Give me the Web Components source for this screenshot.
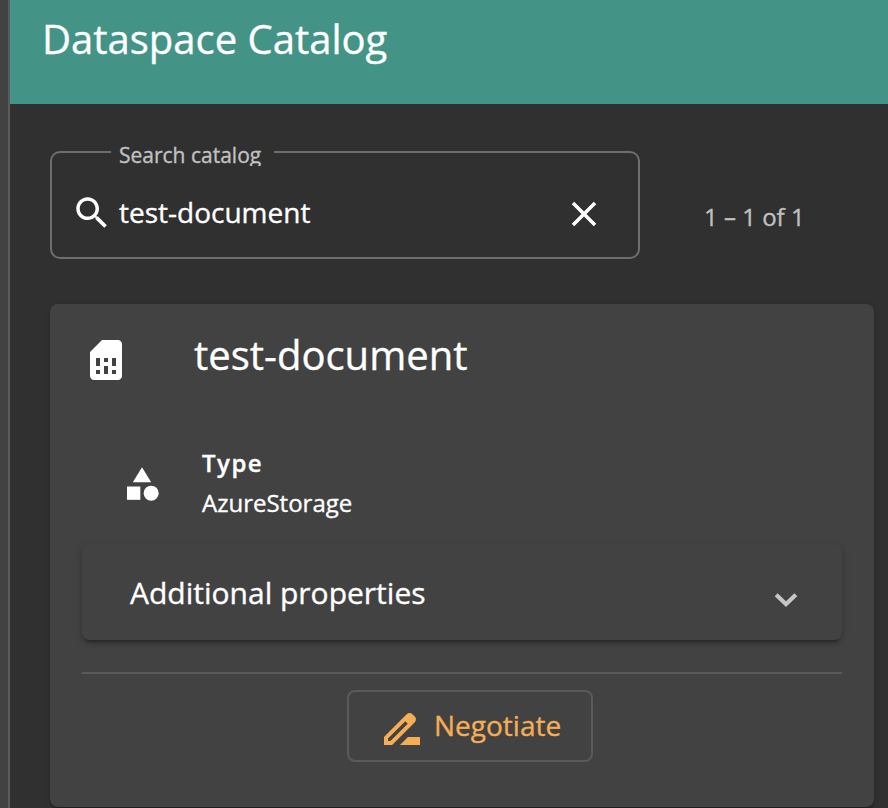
<!DOCTYPE html>
<html lang="en"><head><meta charset="utf-8"><title>Dataspace Catalog</title>
<style>
html,body{margin:0;height:808px;overflow:hidden;background:#303030}
body{font-family:"Open Sans","Noto Sans",sans-serif;color:#fff;-webkit-text-stroke:.35px currentColor}
</style></head><body>
<catalog-shell>
  <catalog-header slot="header">Dataspace Catalog</catalog-header>
  <search-field slot="search" label="Search catalog">test-document</search-field>
  <page-range slot="range">1 – 1 of 1</page-range>
  <asset-card>
    <span slot="title">test-document</span>
    <property-item label="Type">AzureStorage</property-item>
    <expansion-panel>Additional properties</expansion-panel>
    <outline-button slot="action">Negotiate</outline-button>
  </asset-card>
</catalog-shell>
<script>
const icons = {
  search:'<path d="M15.5 14h-.79l-.28-.27C15.41 12.59 16 11.11 16 9.5 16 5.91 13.09 3 9.5 3S3 5.91 3 9.5 5.91 16 9.5 16c1.61 0 3.09-.59 4.23-1.57l.27.28v.79l5 4.99L20.49 19l-4.99-5zm-6 0C7.01 14 5 11.99 5 9.5S7.01 5 9.5 5 14 7.01 14 9.5 11.99 14 9.5 14z"/>',
  close:'<path d="M19 6.41L17.59 5 12 10.59 6.41 5 5 6.41 10.59 12 5 17.59 6.41 19 12 13.41 17.59 19 19 17.59 13.41 12z"/>',
  sim:'<path d="M19.99 4c0-1.1-.89-2-1.99-2h-8L4 8v12c0 1.1.9 2 2 2h12.01c1.1 0 1.99-.9 1.99-2l-.01-16zM9 19H7v-2h2v2zm8 0h-2v-2h2v2zm-8-4H7v-4h2v4zm4 4h-2v-4h2v4zm0-6h-2v-2h2v2zm4 2h-2v-4h2v4z"/>',
  category:'<path d="M12 2l-5.5 9h11z"/><circle cx="17.5" cy="17.5" r="4.5"/><path d="M3 13.5h8v8H3z"/>',
  rename:'<path d="M18.41 5.8L17.2 4.59c-.78-.78-2.05-.78-2.83 0l-2.68 2.68L3 15.96V20h4.04l8.74-8.74 2.63-2.63c.79-.78.79-2.05 0-2.83zM6.21 18H5v-1.21l8.66-8.66 1.21 1.21L6.21 18zM11 20l4-4h6v4H11z"/>',
  chevron:'<path d="M7.1 9.35L12 14.1l4.9-4.75" fill="none" stroke="currentColor" stroke-width="2.1"/>'
};
function define(name, html){
  customElements.define(name, class extends HTMLElement{
    constructor(){
      super();
      const t=document.createElement('template');
      t.innerHTML=html;
      this.attachShadow({mode:'open'}).append(t.content.cloneNode(true));
      this.shadowRoot.querySelectorAll('[data-label]').forEach(e=>e.textContent=this.getAttribute('label'));
    }
  });
}
customElements.define('ui-icon', class extends HTMLElement{
  connectedCallback(){
    if(this.shadowRoot) return;
    this.attachShadow({mode:'open'}).innerHTML=`<style>:host{display:block;flex:none;width:48px;height:48px}svg{display:block;width:100%;height:100%;fill:currentColor}</style><svg viewBox="0 0 24 24">${icons[this.getAttribute('name')]}</svg>`;
  }
});
define('catalog-shell',`<style>
:host{display:flex;height:808px;overflow:hidden}
.rail{width:8px;flex:none;background:#424242;border-right:2px solid #5a5a5a}
main{flex:1;display:flex;flex-direction:column}
.content{padding:40px 14px 0 40px}
.tools{display:flex;align-items:flex-start;height:160px}
</style><div class="rail"></div><main><slot name="header"></slot><div class="content"><div class="tools"><slot name="search"></slot><slot name="range"></slot></div><slot></slot></div></main>`);
define('catalog-header',`<style>
:host{display:block;box-sizing:border-box;height:104px;flex:none;background:#439487;padding:7px 32px;font-size:40px;line-height:64px;white-space:nowrap}
</style><slot></slot>`);
define('search-field',`<style>
:host{display:grid;width:590px;height:115px;flex:none}
.outline,.row{grid-area:1/1}
.outline{display:flex;margin-top:7px;height:108px}
.outline>div{box-sizing:border-box;border:2px solid #6e6e6e}
.start{width:61px;border-right:0!important;border-radius:10px 0 0 10px}
.gap{width:163px;border-width:0 0 2px!important}
.end{flex:1;border-left:0!important;border-radius:0 10px 10px 0}
.label{display:block;margin:-14px 0 0 8px;height:29px;width:155px;overflow:hidden;font-size:21px;line-height:36px;color:#c1c1c1;white-space:nowrap}
.row{display:flex;align-items:center;height:42px;margin-top:48px;padding:0 35px 0 21px}
.row ui-icon{width:42px;height:42px}
.value{flex:1;margin:-2px 0 0 6px;font-size:28px;line-height:40px;white-space:nowrap}
.row .close{margin-top:2px}
</style><div class="outline"><div class="start"></div><div class="gap"><span class="label" data-label></span></div><div class="end"></div></div>
<div class="row"><ui-icon name="search"></ui-icon><span class="value"><slot></slot></span><ui-icon class="close" name="close"></ui-icon></div>`);
define('page-range',`<style>:host{display:block;margin:57px 0 0 64px;font-size:24px;line-height:32px;color:#c1c1c1;white-space:nowrap}</style><slot></slot>`);
define('asset-card',`<style>
:host{display:block;box-sizing:border-box;height:503px;padding:32px 32px 0;border-radius:8px;background:#424242;box-shadow:0 4px 2px -2px #0003,0 2px 2px #00000024,0 2px 6px #0000001f}
header{display:flex;height:113px}
.title{margin:-9px 0 0 64px;font-size:40px;line-height:56px;white-space:nowrap}
footer{margin-top:32px;border-top:2px solid #5a5a5a;padding:16px 0 0 16px;display:flex;justify-content:center}
</style><header><ui-icon name="sim"></ui-icon><div class="title"><slot name="title"></slot></div></header><slot></slot><footer><slot name="action"></slot></footer>`);
define('property-item',`<style>
:host{display:flex;height:95px;padding-left:40px;white-space:nowrap}
ui-icon{width:40px;height:40px;margin-top:15px}
.text{margin:-6px 0 0 40px;font-size:24px;line-height:40px}
.label{font-weight:600;letter-spacing:1.5px}
</style><ui-icon name="category"></ui-icon><div class="text"><div class="label" data-label></div><div><slot></slot></div></div>`);
define('expansion-panel',`<style>
:host{display:flex;box-sizing:border-box;height:96px;align-items:center;justify-content:space-between;padding:0 32px 0 48px;border-radius:8px;background:#424242;font-size:30px;line-height:40px;white-space:nowrap;box-shadow:0 6px 2px -4px #0003,0 4px 4px #00000024,0 2px 10px #0000001f}
.text{margin-top:2px}
ui-icon{color:#c6c6c6;margin-top:15px}
</style><span class="text"><slot></slot></span><ui-icon name="chevron"></ui-icon>`);
define('outline-button',`<style>
:host{display:flex;box-sizing:border-box;width:246px;height:72px;border:2px solid #5a5a5a;border-radius:8px;padding-left:29px;color:#f5ae56;font-size:28px;line-height:66px;white-space:nowrap}
ui-icon{margin:13px 8px 0 0}
</style><ui-icon name="rename"></ui-icon><slot></slot>`);
</script>
</body></html>
